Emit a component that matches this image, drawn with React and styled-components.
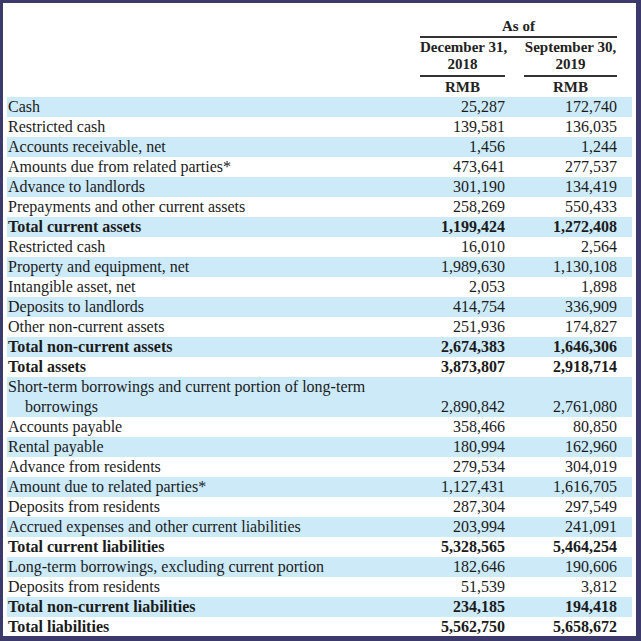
import React from 'react'
import styled, { createGlobalStyle } from 'styled-components'

const Global = createGlobalStyle`
  html, body { margin: 0; padding: 0; background: #fff; }
  body { font-family: "Liberation Serif", "Times New Roman", serif; color: #1b1b1b; }
`

const rows = [
  ['Cash', '25,287', '172,740'],
  ['Restricted cash', '139,581', '136,035'],
  ['Accounts receivable, net', '1,456', '1,244'],
  ['Amounts due from related parties*', '473,641', '277,537'],
  ['Advance to landlords', '301,190', '134,419'],
  ['Prepayments and other current assets', '258,269', '550,433'],
  ['Total current assets', '1,199,424', '1,272,408', true],
  ['Restricted cash', '16,010', '2,564'],
  ['Property and equipment, net', '1,989,630', '1,130,108'],
  ['Intangible asset, net', '2,053', '1,898'],
  ['Deposits to landlords', '414,754', '336,909'],
  ['Other non-current assets', '251,936', '174,827'],
  ['Total non-current assets', '2,674,383', '1,646,306', true],
  ['Total assets', '3,873,807', '2,918,714', true],
  ['Short-term borrowings and current portion of long-term|borrowings', '2,890,842', '2,761,080'],
  ['Accounts payable', '358,466', '80,850'],
  ['Rental payable', '180,994', '162,960'],
  ['Advance from residents', '279,534', '304,019'],
  ['Amount due to related parties*', '1,127,431', '1,616,705'],
  ['Deposits from residents', '287,304', '297,549'],
  ['Accrued expenses and other current liabilities', '203,994', '241,091'],
  ['Total current liabilities', '5,328,565', '5,464,254', true],
  ['Long-term borrowings, excluding current portion', '182,646', '190,606'],
  ['Deposits from residents', '51,539', '3,812'],
  ['Total non-current liabilities', '234,185', '194,418', true],
  ['Total liabilities', '5,562,750', '5,658,672', true],
]

const Frame = styled.div`
  box-sizing: border-box;
  width: 641px;
  height: 641px;
  border-style: solid;
  border-color: #3b3a6b;
  border-width: 3px 5px 5px 3px;
  background: #fff;
  overflow: hidden;
`

const Grid = styled.div`
  display: grid;
  grid-template-columns: 1fr 85px 93px;
  column-gap: 19px;
  margin: 0 4px;
  padding: 0 15px 0 1px;
  font-size: 16px;
`

const Header = styled(Grid)`
  padding-top: 13px;
  font-size: 15px;
  font-weight: bold;
  color: #222;
  text-align: center;
`

const AsOf = styled.div`
  grid-column: 2 / 4;
  line-height: 20px;
  border-bottom: 2px solid #333;
`

const DateCell = styled.div`
  grid-row: 2;
  grid-column: ${p => p.$col};
  line-height: 16.5px;
  padding: 1px 0 3px;
  white-space: nowrap;
  border-bottom: 2px solid #333;
`

const Unit = styled.div`
  grid-row: 3;
  grid-column: ${p => p.$col};
  line-height: 20px;
`

const Row = styled(Grid)`
  line-height: 20px;
  background: ${p => (p.$shade ? '#cdeaf9' : 'transparent')};
  font-weight: ${p => (p.$bold ? 'bold' : 'normal')};
`

const Label = styled.div`
  white-space: nowrap;
`

const Indent = styled.span`
  display: block;
  padding-left: 17px;
`

const Num = styled.div`
  text-align: right;
  align-self: end;
`

export default function App() {
  return (
    <Frame>
      <Global />
      <Header>
        <AsOf>As of</AsOf>
        <DateCell $col={2}>December 31,<br />2018</DateCell>
        <DateCell $col={3}>September 30,<br />2019</DateCell>
        <Unit $col={2}>RMB</Unit>
        <Unit $col={3}>RMB</Unit>
      </Header>
      {rows.map(([label, a, b, bold], i) => {
        const [first, rest] = label.split('|')
        return (
          <Row key={i} $shade={i % 2 === 0} $bold={bold}>
            <Label>
              {first}
              {rest && <Indent>{rest}</Indent>}
            </Label>
            <Num>{a}</Num>
            <Num>{b}</Num>
          </Row>
        )
      })}
    </Frame>
  )
}
